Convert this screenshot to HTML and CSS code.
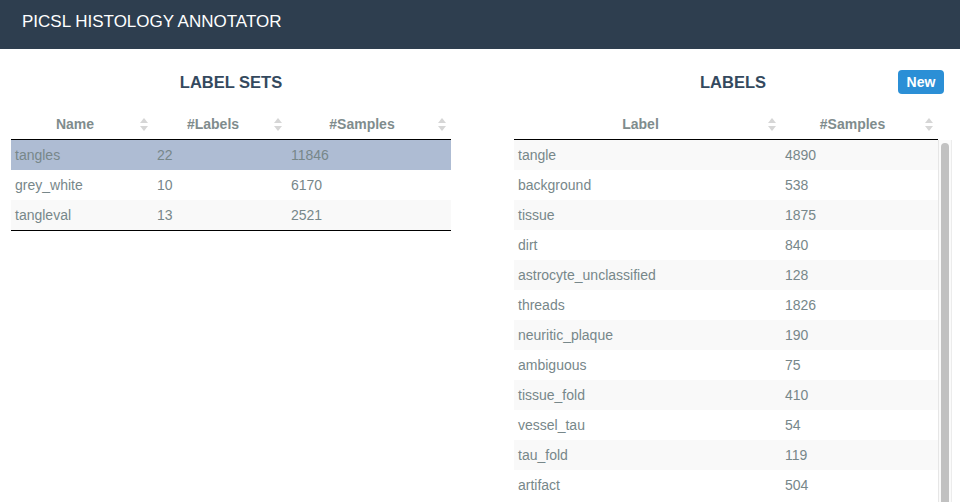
FILE: index.html
```html
<!DOCTYPE html>
<html>
<head>
    <title>PICSL Histology Annotator</title>
    <link rel="stylesheet" href="styles.css">
</head>
<body>
    <div class="navbar">PICSL HISTOLOGY ANNOTATOR</div>

    <div class="main">
        <div class="panel panel-sets">
            <div class="panel-head">
                <span></span>
                <h2>LABEL SETS</h2>
                <span></span>
            </div>
            <table class="grid sets">
                <colgroup>
                    <col style="width: 142px">
                    <col style="width: 134px">
                    <col style="width: 164px">
                </colgroup>
                <thead>
                    <tr>
                        <th>Name<i class="sort"></i></th>
                        <th>#Labels<i class="sort"></i></th>
                        <th>#Samples<i class="sort"></i></th>
                    </tr>
                </thead>
                <tbody>
                    <tr class="selected"><td>tangles</td><td>22</td><td>11846</td></tr>
                    <tr><td>grey_white</td><td>10</td><td>6170</td></tr>
                    <tr><td>tangleval</td><td>13</td><td>2521</td></tr>
                </tbody>
            </table>
        </div>

        <div class="panel panel-labels">
            <div class="panel-head">
                <span></span>
                <h2>LABELS</h2>
                <button class="btn-new">New</button>
            </div>
            <table class="grid labels-head">
                <colgroup>
                    <col style="width: 267px">
                    <col style="width: 157px">
                </colgroup>
                <thead>
                    <tr>
                        <th>Label<i class="sort"></i></th>
                        <th>#Samples<i class="sort"></i></th>
                    </tr>
                </thead>
            </table>
            <div class="scroll-wrap">
                <div class="scroll-body">
                    <table class="grid labels">
                        <colgroup>
                            <col style="width: 267px">
                            <col style="width: 157px">
                        </colgroup>
                        <tbody>
                            <tr><td>tangle</td><td>4890</td></tr>
                            <tr><td>background</td><td>538</td></tr>
                            <tr><td>tissue</td><td>1875</td></tr>
                            <tr><td>dirt</td><td>840</td></tr>
                            <tr><td>astrocyte_unclassified</td><td>128</td></tr>
                            <tr><td>threads</td><td>1826</td></tr>
                            <tr><td>neuritic_plaque</td><td>190</td></tr>
                            <tr><td>ambiguous</td><td>75</td></tr>
                            <tr><td>tissue_fold</td><td>410</td></tr>
                            <tr><td>vessel_tau</td><td>54</td></tr>
                            <tr><td>tau_fold</td><td>119</td></tr>
                            <tr><td>artifact</td><td>504</td></tr>
                        </tbody>
                    </table>
                </div>
                <div class="scrollbar"><div class="thumb"></div></div>
            </div>
        </div>
    </div>
</body>
</html>
```

FILE: styles.css
```css
html, body {
    margin: 0;
    padding: 0;
    height: 100%;
    overflow: hidden;
    background: #fff;
    font-family: 'Liberation Sans', Arial, sans-serif;
}
.navbar {
    height: 49px;
    line-height: 44px;
    background: #2e3e4f;
    color: #fff;
    font-size: 17px;
    padding-left: 22px;
}
.main {
    display: flex;
}
.panel-sets {
    width: 440px;
    margin-left: 11px;
}
.panel-labels {
    width: 438px;
    margin-left: 63px;
}
.panel-head {
    display: grid;
    grid-template-columns: 1fr auto 1fr;
    align-items: center;
    padding: 21px 0 15px 0;
    height: 24px;
}
.panel-head h2 {
    margin: 0;
    font-size: 16.5px;
    line-height: 24px;
    color: #34495e;
}
.btn-new {
    justify-self: end;
    margin-right: 8px;
    width: 46px;
    height: 24px;
    border: none;
    border-radius: 4px;
    background: #2b8fd6;
    color: #fff;
    font-family: inherit;
    font-size: 14px;
    font-weight: bold;
    padding: 0;
}
.grid {
    border-collapse: collapse;
    table-layout: fixed;
    font-size: 14px;
    color: #77878a;
}
.sets {
    width: 440px;
    border-bottom: 1px solid #000;
}
.labels-head, .labels {
    width: 424px;
}
.grid th {
    position: relative;
    height: 30px;
    padding: 0 18px 0 4px;
    text-align: center;
    font-weight: bold;
    color: #7f8c8d;
    border-bottom: 1px solid #000;
}
.grid td {
    height: 30px;
    padding: 0 4px;
    white-space: nowrap;
}
.grid tbody tr:nth-child(odd) {
    background: #f9f9f9;
}
.grid tbody tr.selected {
    background: #aebcd3;
}
.sort {
    position: absolute;
    right: 5px;
    top: 9px;
    width: 8px;
    height: 13px;
}
.sort::before, .sort::after {
    content: "";
    position: absolute;
    left: 0;
    border-left: 4px solid transparent;
    border-right: 4px solid transparent;
}
.sort::before {
    top: 0;
    border-bottom: 5px solid #d6d6d6;
}
.sort::after {
    bottom: 0;
    border-top: 5px solid #d6d6d6;
}
.scroll-wrap {
    display: flex;
    height: 362px;
}
.scroll-body {
    width: 424px;
    overflow: hidden;
}
.scrollbar {
    width: 12px;
    background: #fafafa;
    border-left: 1px solid #e6e6e6;
    border-right: 1px solid #ececec;
    padding: 3px 2px 0 2px;
    box-sizing: border-box;
    width: 14px;
}
.scrollbar .thumb {
    height: 380px;
    background: #c1c1c1;
    border-radius: 5px;
}
```
